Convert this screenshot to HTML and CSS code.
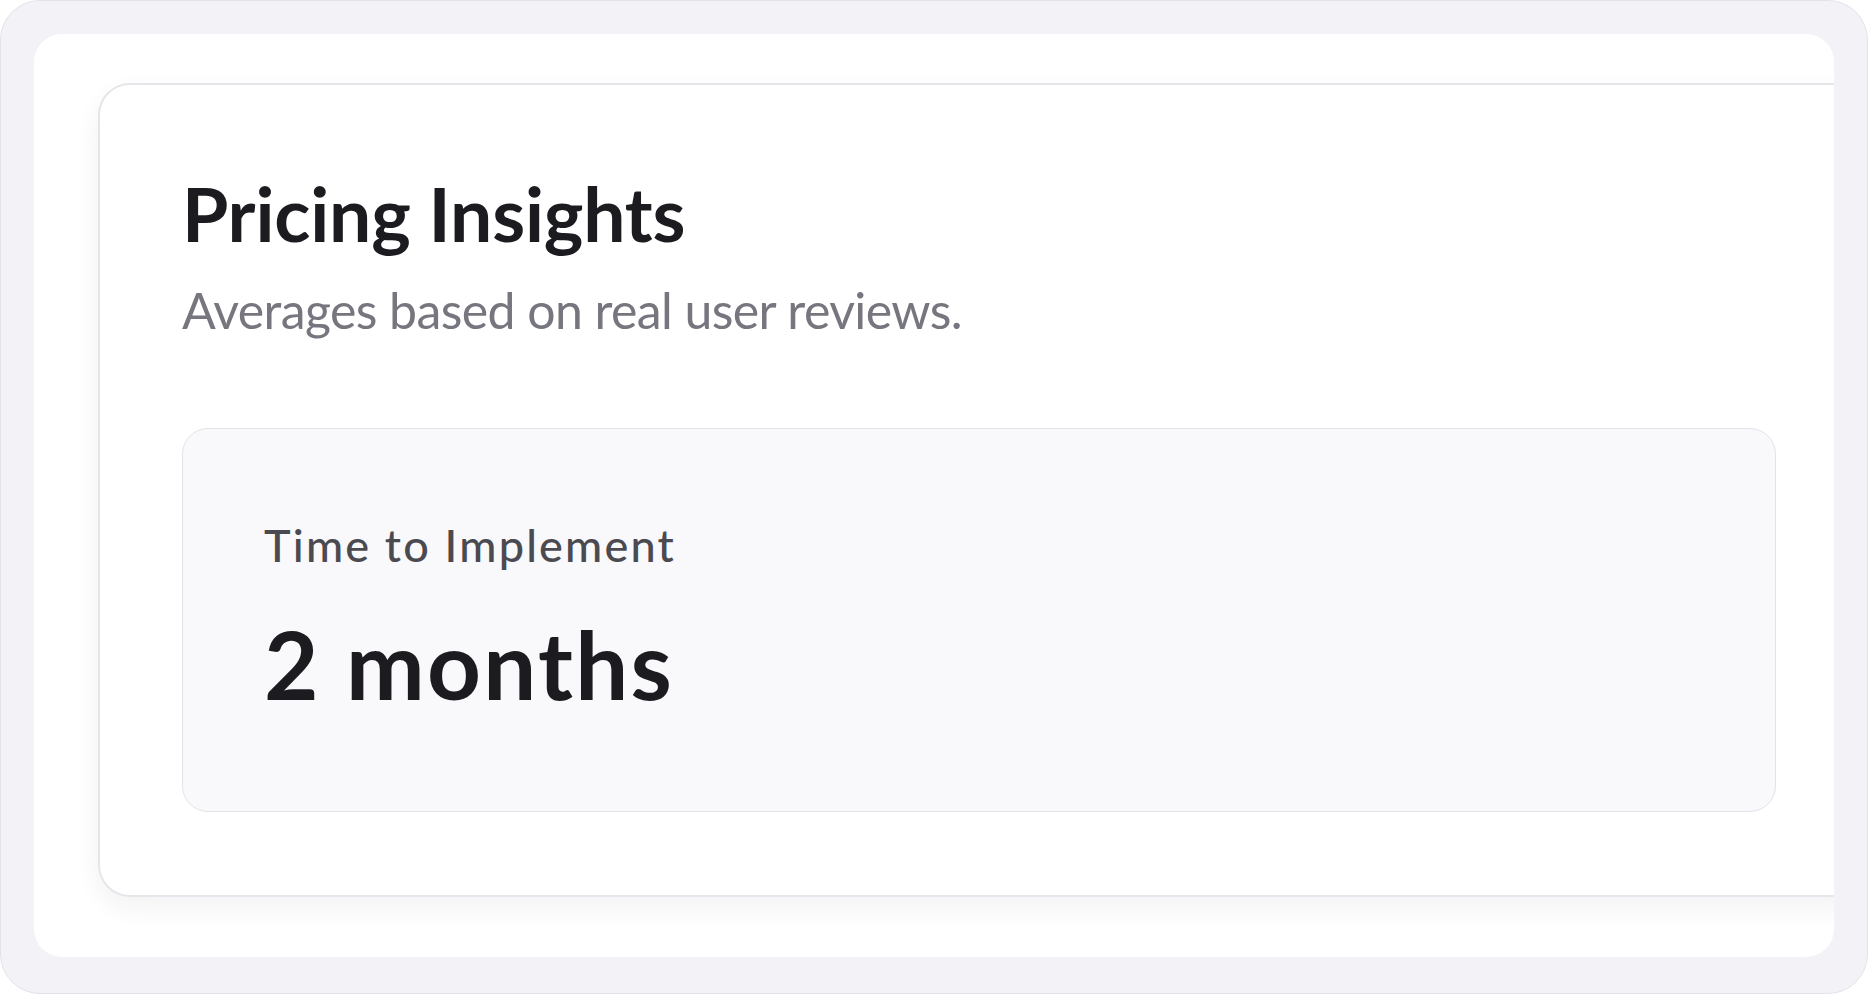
FILE: index.html
```html
<!DOCTYPE html>
<html lang="en">
<head>
<meta charset="utf-8">
<title>Pricing Insights</title>
<link rel="stylesheet" href="styles.css">
</head>
<body>
  <div class="frame">
    <div class="panel">
      <section class="card">
        <h1 class="title">Pricing Insights</h1>
        <p class="subtitle">Averages based on real user reviews.</p>
        <div class="stat">
          <div class="stat-label">Time to Implement</div>
          <div class="stat-value">2 months</div>
        </div>
      </section>
    </div>
  </div>
</body>
</html>
```

FILE: styles.css
```css
* {
  box-sizing: border-box;
}

html, body {
  margin: 0;
  padding: 0;
  background: #ffffff;
}

body {
  width: 1868px;
  height: 994px;
  overflow: hidden;
  font-family: "Lato", "Inter", "Liberation Sans", sans-serif;
}

.frame {
  width: 1868px;
  height: 994px;
  background: #f3f2f7;
  border: 1px solid #e3e2e8;
  border-radius: 40px;
  padding: 33px 33px 36px 33px;
  display: flex;
}

.panel {
  flex: 1;
  background: #ffffff;
  border-radius: 28px;
  overflow: hidden;
  padding: 49px 0 0 64px;
}

.card {
  margin-right: -26px;
  background: #ffffff;
  border: 2px solid #e6e5ea;
  border-right: none;
  border-radius: 32px 0 0 32px;
  padding: 83px 83px 83px 82px;
  box-shadow: 0 10px 26px rgba(30, 30, 60, 0.06);
}

.title {
  margin: 0;
  font-size: 75px;
  line-height: 90px;
  font-weight: 700;
  color: #1c1b20;
  letter-spacing: -0.2px;
}

.subtitle {
  margin: 21px 0 0 0;
  font-size: 50px;
  line-height: 62px;
  font-weight: 400;
  color: #77767e;
  letter-spacing: -0.6px;
}

.stat {
  margin-top: 87px;
  width: 1594px;
  background: #f9f8fb;
  border: 1px solid #e4e3e8;
  border-radius: 26px;
  padding: 89px 80px 91px 81px;
}

.stat-label {
  font-size: 45px;
  line-height: 54px;
  font-weight: 500;
  color: #4b4a50;
  letter-spacing: 2.2px;
}

.stat-value {
  margin-top: 35px;
  font-size: 94px;
  line-height: 113px;
  font-weight: 700;
  color: #1c1b1f;
  letter-spacing: 2.3px;
}
```
